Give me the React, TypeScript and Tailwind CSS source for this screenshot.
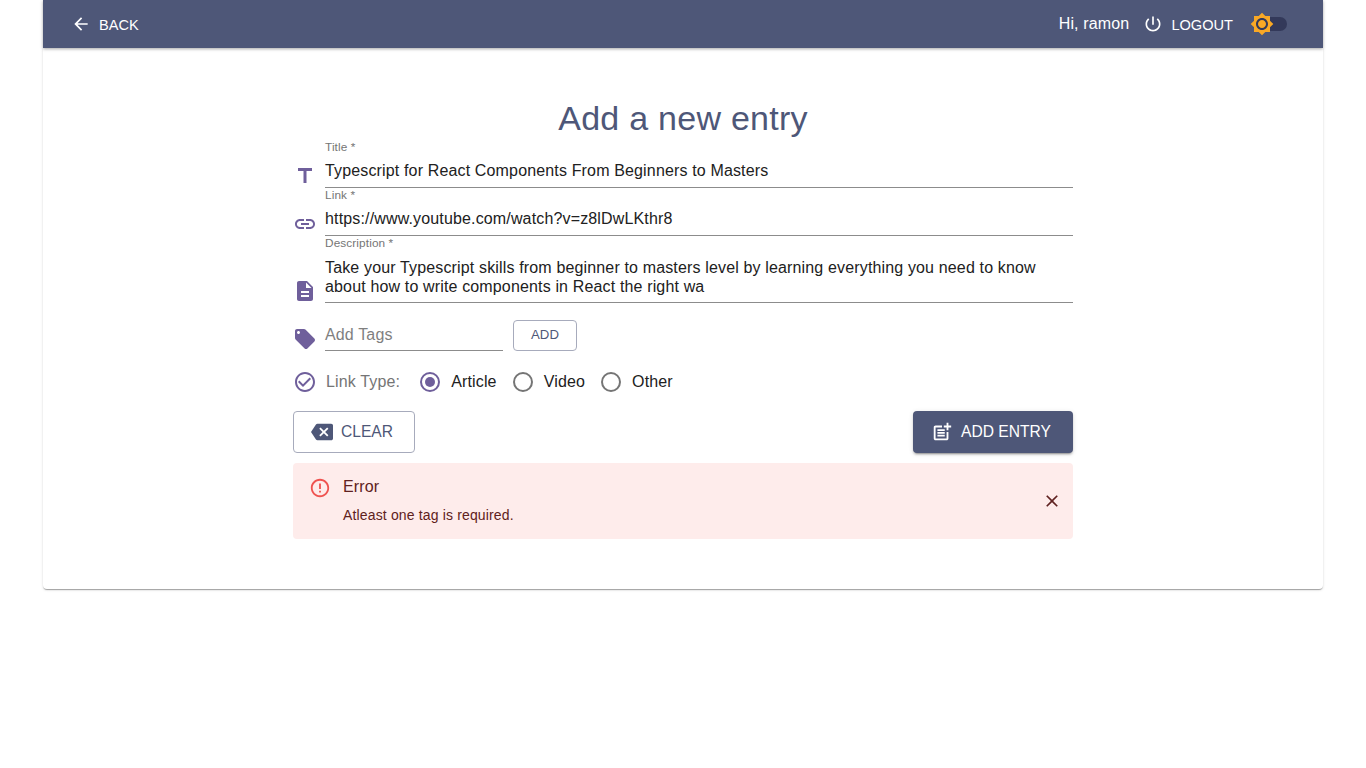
import React from "react";

const Icon = ({ d, className }: { d: string; className: string }) => (
  <svg viewBox="0 0 24 24" className={className} fill="currentColor" aria-hidden="true">
    <path d={d} />
  </svg>
);

const P = {
  back: "M20 11H7.83l5.59-5.59L12 4l-8 8 8 8 1.41-1.41L7.83 13H20v-2z",
  power: "M13 3h-2v10h2V3zm4.83 2.17l-1.42 1.42C17.99 7.86 19 9.81 19 12c0 3.87-3.13 7-7 7s-7-3.13-7-7c0-2.19 1.01-4.14 2.58-5.42L6.17 5.17C4.23 6.82 3 9.26 3 12c0 4.97 4.03 9 9 9s9-4.03 9-9c0-2.74-1.23-5.18-3.17-6.83z",
  sun: "M20 8.69V4h-4.69L12 .69 8.69 4H4v4.69L.69 12 4 15.31V20h4.69L12 23.31 15.31 20H20v-4.69L23.31 12 20 8.69zM12 18c-3.31 0-6-2.69-6-6s2.69-6 6-6 6 2.69 6 6-2.69 6-6 6zm0-10c-2.21 0-4 1.79-4 4s1.79 4 4 4 4-1.79 4-4-1.79-4-4-4z",
  title: "M5 4v3h5.5v12h3V7H19V4z",
  link: "M3.9 12c0-1.71 1.39-3.1 3.1-3.1h4V7H7c-2.76 0-5 2.24-5 5s2.24 5 5 5h4v-1.9H7c-1.71 0-3.1-1.39-3.1-3.1zM8 13h8v-2H8v2zm9-6h-4v1.9h4c1.71 0 3.1 1.39 3.1 3.1s-1.39 3.1-3.1 3.1h-4V17h4c2.76 0 5-2.24 5-5s-2.24-5-5-5z",
  desc: "M14 2H6c-1.1 0-1.99.9-1.99 2L4 20c0 1.1.89 2 1.99 2H18c1.1 0 2-.9 2-2V8l-6-6zm2 16H8v-2h8v2zm0-4H8v-2h8v2zm-3-5V3.5L18.5 9H13z",
  tag: "M21.41 11.58l-9-9C12.05 2.22 11.55 2 11 2H4c-1.1 0-2 .9-2 2v7c0 .55.22 1.05.59 1.42l9 9c.36.36.86.58 1.41.58.55 0 1.05-.22 1.41-.59l7-7c.37-.36.59-.86.59-1.41 0-.55-.23-1.06-.59-1.42zM5.5 7C4.67 7 4 6.33 4 5.5S4.67 4 5.5 4 7 4.67 7 5.5 6.33 7 5.5 7z",
  check: "M16.59 7.58L10 14.17l-3.59-3.58L5 12l5 5 8-8zM12 2C6.48 2 2 6.48 2 12s4.48 10 10 10 10-4.48 10-10S17.52 2 12 2zm0 18c-4.42 0-8-3.58-8-8s3.58-8 8-8 8 3.58 8 8-3.58 8-8 8z",
  backspace: "M22 3H7c-.69 0-1.23.35-1.59.88L0 12l5.41 8.11c.36.53.9.89 1.59.89h15c1.1 0 2-.9 2-2V5c0-1.1-.9-2-2-2zm-3 12.59L17.59 17 14 13.41 10.41 17 9 15.59 12.59 12 9 8.41 10.41 7 14 10.59 17.59 7 19 8.41 15.41 12 19 15.59z",
  postAdd: "M17 19.22H5V7h7V5H5c-1.1 0-2 .9-2 2v12c0 1.1.9 2 2 2h12c1.1 0 2-.9 2-2v-7h-2v7.22zM19 2h-2v3h-3c.01.01 0 2 0 2h3v2.99c.01.01 2 0 2 0V7h3V5h-3V2zM7 9h8v2H7zM7 12v2h8v-2h-3zM7 15h8v2H7z",
  error: "M11 15h2v2h-2zm0-8h2v6h-2zm.99-5C6.47 2 2 6.48 2 12s4.47 10 9.99 10C17.52 22 22 17.52 22 12S17.52 2 11.99 2zM12 20c-4.42 0-8-3.58-8-8s3.58-8 8-8 8 3.58 8 8-3.58 8-8 8z",
  close: "M19 6.41L17.59 5 12 10.59 6.41 5 5 6.41 10.59 12 5 17.59 6.41 19 12 13.41 17.59 19 19 17.59 13.41 12z",
};

const Field = ({ icon, label, children }: { icon: string; label: string; children: React.ReactNode }) => (
  <div className="flex items-end">
    <Icon d={icon} className="w-6 h-6 mr-2 shrink-0 text-[#6f5f9b]" />
    <div className="flex-1 border-b border-[#8c8c8c]">
      <div className="text-[11.8px] leading-[14px] tracking-[0.11px] text-[#757575]">{label}</div>
      {children}
    </div>
  </div>
);

const Radio = ({ label, checked }: { label: string; checked?: boolean }) => (
  <div className="flex items-center gap-[11px] mr-4">
    <span
      className={`w-5 h-5 rounded-full border-2 flex items-center justify-center ${
        checked ? "border-[#6f5f9b]" : "border-[#757575]"
      }`}
    >
      {checked && <span className="w-[10px] h-[10px] rounded-full bg-[#6f5f9b]" />}
    </span>
    <span className="text-[16px] tracking-[0.15px] text-[#212121]">{label}</span>
  </div>
);

export default function App() {
  return (
    <div className="min-h-[768px] bg-white font-['Liberation_Sans',Arial,sans-serif] px-[43px]">
      <header className="h-12 bg-[#4e5778] text-white flex items-center justify-between pl-[30px] pr-9 shadow-[0_1px_3px_rgba(0,0,0,0.35)] relative">
        <div className="flex items-center text-[14.6px] leading-[22px]">
          <Icon d={P.back} className="w-5 h-5 mr-2 -ml-[2px]" />
          <span className="pt-[1px]">BACK</span>
        </div>
        <div className="flex items-center">
          <span className="text-[16px] tracking-[0.15px]">Hi, ramon</span>
          <Icon d={P.power} className="w-5 h-5 ml-[14px] mr-2" />
          <span className="text-[14.6px] leading-[22px] pt-[1px]">LOGOUT</span>
          <div className="relative w-[34px] h-[14px] ml-[20px] bg-[#33395a] rounded-full">
            <Icon d={P.sun} className="absolute -left-[3px] -top-[5px] w-6 h-6 text-[#f9a825]" />
          </div>
        </div>
      </header>

      <main className="h-[541px] bg-white rounded-b shadow-[0_2px_1px_-1px_rgba(0,0,0,0.2),0_1px_1px_0_rgba(0,0,0,0.14),0_1px_3px_0_rgba(0,0,0,0.12)] pt-[49px]">
        <div className="w-[780px] mx-auto">
          <h1 className="text-[34px] leading-[42px] tracking-[0.25px] text-center text-[#4e5778] font-normal mb-[1px]">Add a new entry</h1>

          <Field icon={P.title} label="Title *">
            <div className="text-[16px] leading-[19px] tracking-[0.15px] pt-[7px] pb-[7px] text-[#212121]">
              Typescript for React Components From Beginners to Masters
            </div>
          </Field>
          <Field icon={P.link} label="Link *">
            <div className="text-[16px] leading-[19px] tracking-[0.15px] pt-[7px] pb-[7px] text-[#212121]">
              https://www.youtube.com/watch?v=z8lDwLKthr8
            </div>
          </Field>
          <Field icon={P.desc} label="Description *">
            <div className="text-[16px] leading-[19px] tracking-[0.15px] pt-[8px] pb-[6px] text-[#212121]">
              Take your Typescript skills from beginner to masters level by learning everything you need to know
              <br />
              about how to write components in React the right wa
            </div>
          </Field>

          <div className="flex items-end mt-[17px]">
            <Icon d={P.tag} className="w-6 h-6 mr-2 shrink-0 text-[#6f5f9b]" />
            <div className="w-[178px] h-[31px] border-b border-[#8c8c8c] text-[16px] leading-[19px] tracking-[0.15px] text-[#7f7f7f] pt-[5px]">
              Add Tags
            </div>
            <div className="ml-[10px] w-16 h-[31px] border border-[#a7abbc] rounded flex items-center justify-center text-[13.2px] pb-[2px] text-[#4e5778]">
              ADD
            </div>
          </div>

          <div className="flex items-center mt-[19px] h-6">
            <Icon d={P.check} className="w-6 h-6 mr-[9px] shrink-0 text-[#6f5f9b]" />
            <span className="text-[16px] tracking-[0.15px] text-[#757575] mr-[20px]">Link Type:</span>
            <Radio label="Article" checked />
            <Radio label="Video" />
            <Radio label="Other" />
          </div>

          <div className="flex justify-between mt-[17px]">
            <div className="w-[122px] h-[42px] border border-[#a7abbc] rounded flex items-center justify-center pr-1 text-[#4e5778] text-[15.6px]">
              <Icon d={P.backspace} className="w-[22px] h-[22px] mr-2" />
              CLEAR
            </div>
            <div className="w-[160px] h-[42px] bg-[#4e5778] rounded text-white flex items-center justify-center pr-1 text-[15.6px] shadow-[0_3px_1px_-2px_rgba(0,0,0,0.2),0_2px_2px_0_rgba(0,0,0,0.14),0_1px_5px_0_rgba(0,0,0,0.12)]">
              <Icon d={P.postAdd} className="w-[22px] h-[22px] mr-2" />
              ADD ENTRY
            </div>
          </div>

          <div className="mt-[10px] h-[76px] bg-[#feeceb] rounded flex items-start pl-4 pr-[11px] text-[#5f2120]">
            <Icon d={P.error} className="w-[22px] h-[22px] mt-[14px] mr-3 text-[#ef5350]" />
            <div className="flex-1 pt-[14px]">
              <div className="text-[16px] leading-[19px] tracking-[0.15px]">Error</div>
              <div className="text-[14px] leading-[20px] tracking-[0.15px] mt-[9px]">Atleast one tag is required.</div>
            </div>
            <Icon d={P.close} className="w-5 h-5 mt-[28px]" />
          </div>
        </div>
      </main>
    </div>
  );
}
